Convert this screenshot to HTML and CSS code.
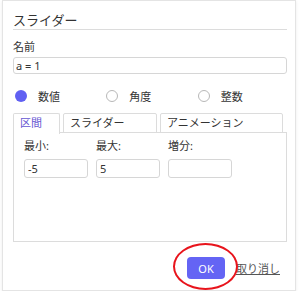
FILE: index.html
```html
<!DOCTYPE html>
<html lang="ja">
<head>
    <meta charset="UTF-8">
    <title>スライダー</title>
    <link rel="stylesheet" href="styles.css">
</head>
<body>
    <div class="dialog">
        <div class="title">スライダー</div>

        <div class="label">名前</div>
        <input class="name-input" type="text" value="a = 1">

        <div class="radios">
            <label class="radio"><span class="dot checked"></span>数値</label>
            <label class="radio"><span class="dot"></span>角度</label>
            <label class="radio"><span class="dot"></span>整数</label>
        </div>

        <div class="tabs">
            <div class="tab active">区間</div>
            <div class="tab tab-slider">スライダー</div>
            <div class="tab tab-anim">アニメーション</div>
            <div class="tab-fill"></div>
        </div>
        <div class="panel">
            <div class="field">
                <div class="field-label">最小:</div>
                <input class="small-input" type="text" value="-5">
            </div>
            <div class="field">
                <div class="field-label">最大:</div>
                <input class="small-input" type="text" value="5">
            </div>
            <div class="field">
                <div class="field-label">増分:</div>
                <input class="small-input" type="text" value="">
            </div>
        </div>

        <div class="footer">
            <button class="ok-btn">OK</button>
            <a class="cancel" href="#">取り消し</a>
            <div class="highlight"></div>
        </div>
    </div>
</body>
</html>
```

FILE: styles.css
```css
body {
    margin: 0;
    background: #fff;
    font-family: "Noto Sans", "Noto Sans CJK JP", sans-serif;
    color: #333;
}
.dialog {
    position: relative;
    margin-left: 2px;
    width: 274px;
    height: 279px;
    padding: 10px 8px 0 10px;
    border: 1px solid #e4e4e4;
    box-shadow: 0 1px 3px rgba(0, 0, 0, 0.08);
    background: #fff;
}
.title {
    font-size: 13px;
    line-height: 18px;
    border-bottom: 1px solid #dcdcdc;
    height: 18px;
    margin-bottom: 10px;
}
.label {
    font-size: 11px;
    line-height: 14px;
    margin-bottom: 3px;
}
.name-input {
    display: block;
    box-sizing: border-box;
    width: 274px;
    height: 17px;
    margin: 0;
    padding: 0 2px;
    border: 1px solid #d6d6d6;
    border-radius: 3px;
    font-family: "Noto Sans", "Noto Sans CJK JP", sans-serif;
    font-size: 11px;
    color: #333;
}
.radios {
    display: flex;
    margin-top: 14px;
    height: 16px;
    align-items: center;
}
.radio {
    display: flex;
    align-items: center;
    font-size: 11px;
    width: 93px;
}
.dot {
    box-sizing: border-box;
    width: 12px;
    height: 12px;
    border-radius: 50%;
    border: 1px solid #b8b8b8;
    margin: 0 11px 0 2px;
}
.dot.checked {
    border: none;
    background: #6060f2;
}
.tabs {
    display: flex;
    margin-top: 9px;
    height: 20px;
}
.tab {
    box-sizing: border-box;
    height: 20px;
    border: 1px solid #dcdcdc;
    border-radius: 2px 2px 0 0;
    font-size: 11px;
    line-height: 18px;
    padding-left: 6px;
    margin-right: 3px;
}
.tab.active {
    width: 47px;
    border-bottom: none;
    color: #6557d2;
    height: 21px;
    background: #fff;
    position: relative;
}
.tab-slider {
    width: 94px;
}
.tab-anim {
    width: 123px;
}
.tab-fill {
    flex: 1;
}
.panel {
    box-sizing: border-box;
    display: flex;
    gap: 8px;
    width: 274px;
    height: 110px;
    margin-top: -1px;
    padding: 6px 0 0 10px;
    border: 1px solid #dcdcdc;
}
.field-label {
    font-size: 11px;
    line-height: 14px;
    margin-bottom: 3px;
}
.small-input {
    box-sizing: border-box;
    width: 64px;
    height: 19px;
    margin: 0;
    padding: 0 3px;
    border: 1px solid #d6d6d6;
    border-radius: 3px;
    font-family: "Noto Sans", "Noto Sans CJK JP", sans-serif;
    font-size: 11px;
    color: #333;
}
.footer {
    position: relative;
    display: flex;
    justify-content: flex-end;
    align-items: center;
    margin-top: 15px;
    height: 22px;
}
.ok-btn {
    width: 38px;
    height: 22px;
    border: none;
    border-radius: 4px;
    background: #6464f4;
    color: #fff;
    font-family: "Noto Sans", sans-serif;
    font-size: 11px;
    padding: 0;
    margin-right: 11px;
}
.cancel {
    font-size: 11px;
    color: #555;
    text-decoration: underline;
    margin-right: 7px;
}
.highlight {
    position: absolute;
    left: 160px;
    top: -14px;
    width: 61px;
    height: 43px;
    border: 2px solid #e8141c;
    border-radius: 50%;
}
```
